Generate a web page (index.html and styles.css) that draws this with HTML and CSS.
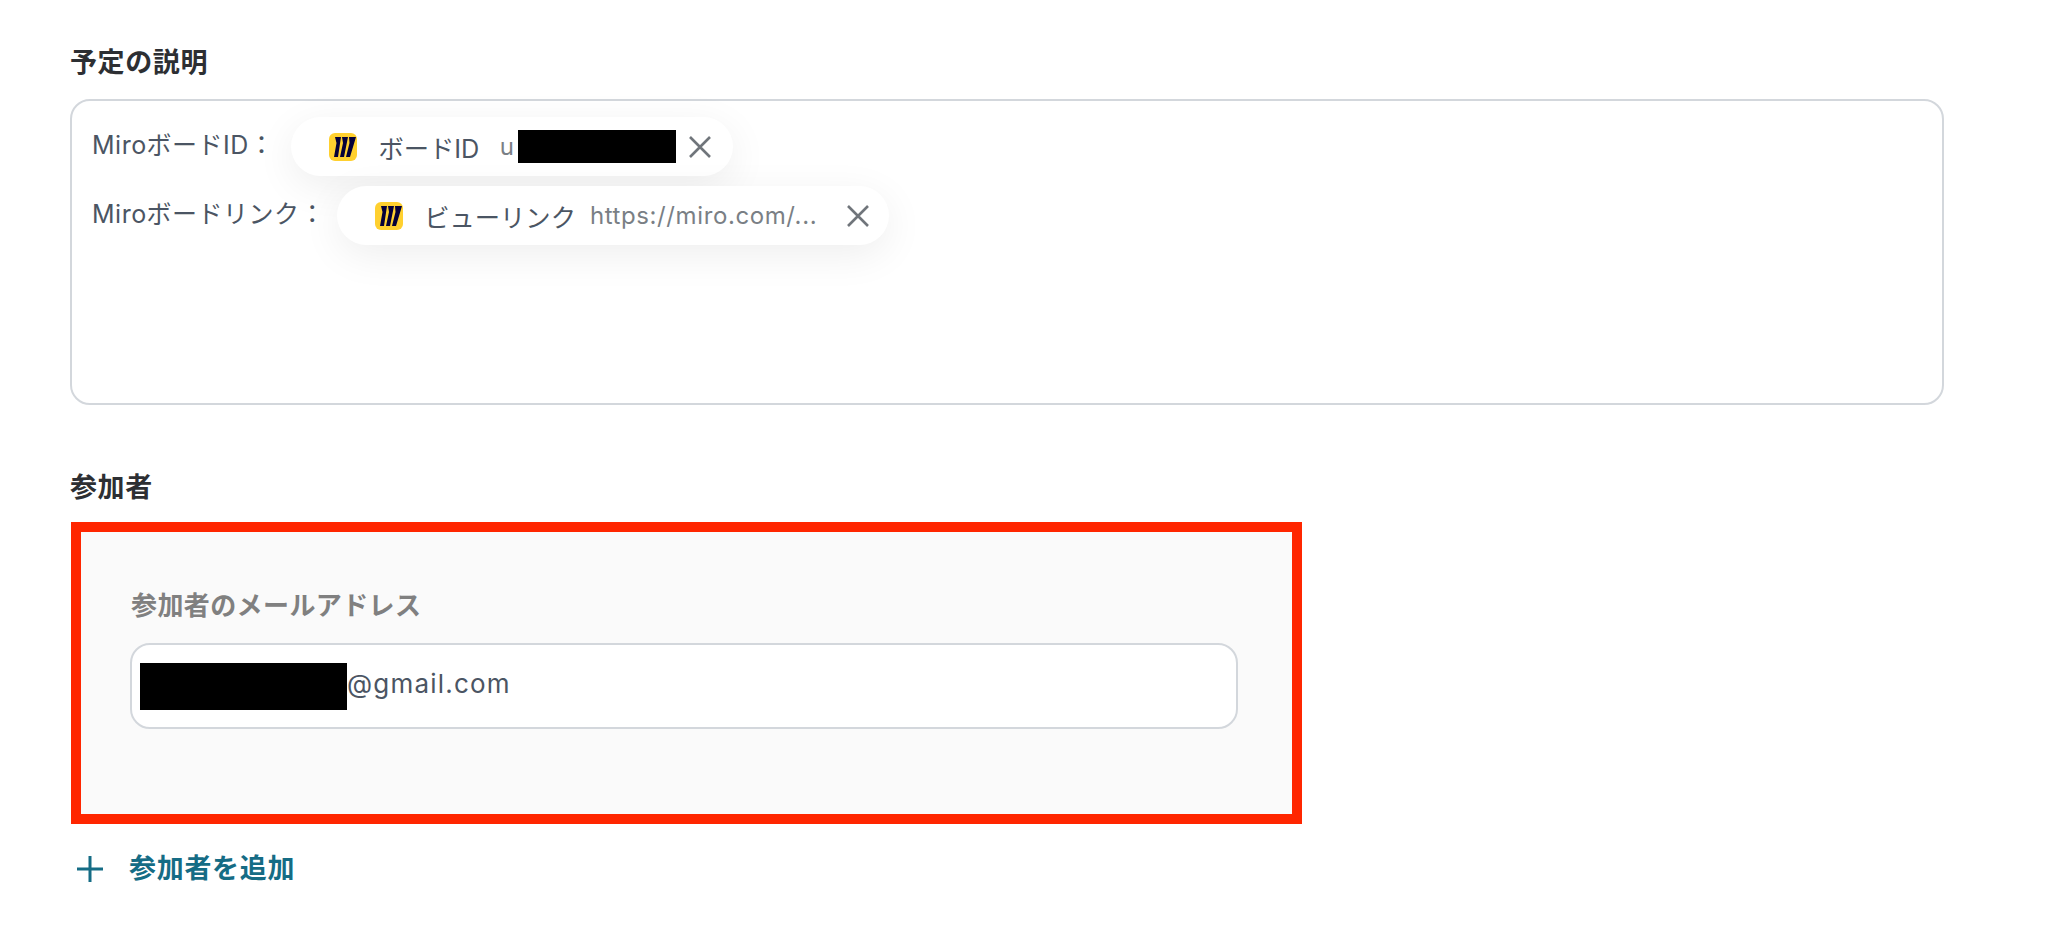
FILE: index.html
```html
<!DOCTYPE html>
<html lang="ja">
<head>
<meta charset="utf-8">
<title>予定の説明</title>
<link rel="stylesheet" href="styles.css">
</head>
<body>
<main class="page">
  <section class="section section-desc">
    <h2 class="title">予定の説明</h2>
    <div class="textarea">
      <div class="row">
        <span class="row-text">MiroボードID：</span>
        <span class="chip chip-id">
          <svg class="miro" viewBox="0 0 28 28"><rect width="28" height="28" rx="6" fill="#ffd02f"/><path d="M6 4h6L9 24H5l2.500-14zM13 4h6l-4 20h-4l3-14zM20 4h7l-6 20h-4l3.500-14z" fill="#050038"/></svg>
          <span class="chip-name">ボードID</span>
          <span class="chip-value chip-value-id">u<span class="redact redact-chip"></span></span>
          <svg class="close" viewBox="0 0 22 22"><path d="M1 1l20 20M21 1L1 21"/></svg>
        </span>
      </div>
      <div class="row">
        <span class="row-text">Miroボードリンク：</span>
        <span class="chip chip-link">
          <svg class="miro" viewBox="0 0 28 28"><rect width="28" height="28" rx="6" fill="#ffd02f"/><path d="M6 4h6L9 24H5l2.500-14zM13 4h6l-4 20h-4l3-14zM20 4h7l-6 20h-4l3.500-14z" fill="#050038"/></svg>
          <span class="chip-name">ビューリンク</span>
          <span class="chip-value chip-value-link">https://miro.com/...</span>
          <svg class="close" viewBox="0 0 22 22"><path d="M1 1l20 20M21 1L1 21"/></svg>
        </span>
      </div>
    </div>
  </section>
  <section class="section section-people">
    <h2 class="title">参加者</h2>
    <div class="panel">
      <label class="panel-label">参加者のメールアドレス</label>
      <div class="input"><span class="redact redact-mail"></span><span class="input-text">@gmail.com</span></div>
    </div>
    <div class="add">
      <svg class="plus" viewBox="0 0 26 26"><path d="M13 0v26M0 13h26"/></svg>
      <span>参加者を追加</span>
    </div>
  </section>
</main>
</body>
</html>
```
FILE: styles.css
```css
* { box-sizing: border-box; }
html, body { margin: 0; padding: 0; background: #fff; }
body {
  width: 2048px;
  height: 944px;
  overflow: hidden;
  font-family: Inter, "Noto Sans CJK JP", sans-serif;
}
.page { padding: 45px 104px 0 70px; }
.title {
  margin: 0;
  font-size: 27px;
  line-height: 36px;
  font-weight: 600;
  color: #2d2f33;
  letter-spacing: 0.6px;
}
.section-desc .title { margin-bottom: 18px; }
.textarea {
  height: 306px;
  border: 2px solid #d3d7dc;
  border-radius: 20px;
  background: #fff;
  padding: 16px 0 0 20px;
}
.row { display: flex; align-items: center; height: 59px; margin-bottom: 10px; }
.row-text {
  font-size: 25px;
  line-height: 40px;
  color: #4b5563;
  letter-spacing: 0.5px;
  margin-top: -3px;
  white-space: nowrap;
}
.chip {
  display: flex;
  align-items: center;
  height: 59px;
  padding-left: 38px;
  border-radius: 30px;
  background: #fff;
  box-shadow: 0 10px 40px rgba(0, 0, 0, 0.07);
  white-space: nowrap;
}
.chip-id { width: 442px; margin-left: 17px; }
.chip-link { width: 552px; margin-left: 12px; }
.miro { width: 28px; height: 28px; flex: none; }
.chip-name {
  margin-left: 21px;
  font-size: 25.3px;
  color: #4b5563;
}
.chip-value {
  font-size: 24px;
  color: #7a7f85;
  letter-spacing: 0.6px;
  display: flex;
  align-items: center;
}
.chip-value-id { width: 173.400px; margin-left: 20.500px; }
.chip-value-link { width: 241px; margin-left: 14px; }
.redact { display: block; background: #000; flex: none; }
.redact-chip { width: 158px; height: 33px; margin-left: 3.400px; }
.close {
  width: 22px;
  height: 22px;
  flex: none;
  margin-left: 16px;
  fill: none;
  stroke: #70757b;
  stroke-width: 2.6;
}
.section-people { margin-top: 65px; }
.section-people .title { margin-bottom: 16px; }
.panel {
  width: 1231px;
  height: 302px;
  margin-left: 1px;
  border: 10px solid #ff2600;
  background: #fafafa;
  padding: 55px 50px 0;
}
.panel-label {
  display: block;
  font-size: 26px;
  line-height: 38px;
  font-weight: 600;
  color: #808080;
  letter-spacing: 0.4px;
}
.input {
  display: flex;
  align-items: center;
  width: 1108px;
  height: 86px;
  margin-top: 18px;
  margin-left: -1px;
  padding-left: 8px;
  border: 2px solid #d3d7dc;
  border-radius: 20px;
  background: #fff;
}
.redact-mail { width: 207px; height: 47px; }
.input-text {
  margin-top: -6px;
  font-size: 26px;
  color: #4b5563;
  letter-spacing: 1.2px;
}
.add {
  display: flex;
  align-items: center;
  margin: 27px 0 0 7px;
  font-size: 27px;
  font-weight: 600;
  color: #156c85;
  line-height: 36px;
  letter-spacing: 0.7px;
}
.plus {
  width: 26px;
  height: 26px;
  margin-right: 26px;
  fill: none;
  stroke: #156c85;
  stroke-width: 3;
}
```
